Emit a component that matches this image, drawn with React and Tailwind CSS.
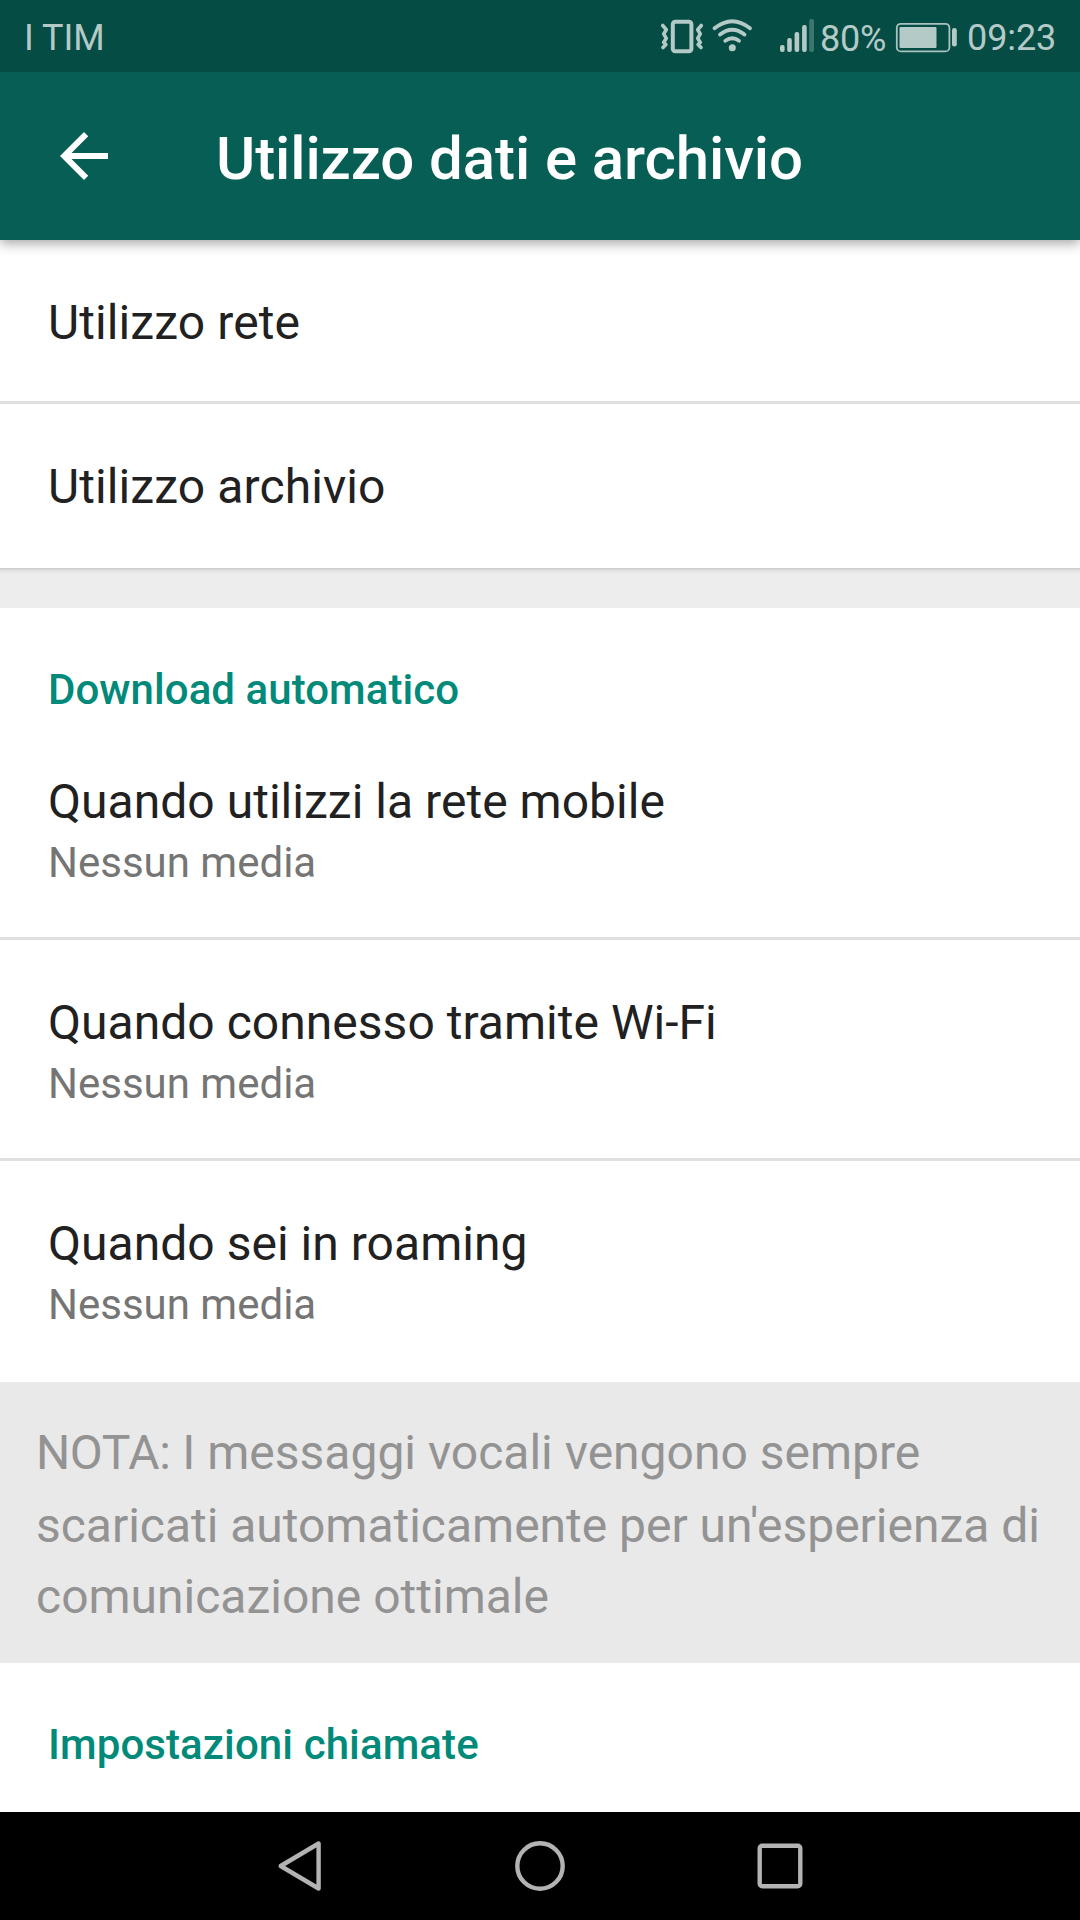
const autoDownload = [
  { title: 'Quando utilizzi la rete mobile', value: 'Nessun media', box: 'h-[226px] pt-[60px] border-b-[3px]' },
  { title: 'Quando connesso tramite Wi-Fi', value: 'Nessun media', box: 'h-[221px] pt-[55px] border-b-[3px]' },
  { title: 'Quando sei in roaming', value: 'Nessun media', box: 'h-[221px] pt-[55px]' },
];

function StatusIcons() {
  return (
    <svg className="h-[72px] w-[160px]" viewBox="658 0 160 72" fill="none" stroke="#b4cac7" strokeLinecap="round" strokeLinejoin="round">
      <rect x="672.8" y="21.8" width="18.6" height="29.4" rx="2.5" strokeWidth="4" />
      <path d="M662.7 25.5l3.6 4.2-2.6 4.2 2.6 4.4-2.6 4.2 2.2 2-2.9 3" strokeWidth="3.6" />
      <path d="M701.3 25.5l-3.6 4.2 2.6 4.2-2.6 4.4 2.6 4.2-2.2 2 2.9 3" strokeWidth="3.6" />
      <path d="M714.5 28.3Q732.3 14.2 750 28.3M720 34.5Q732.3 25 744.5 34.5M725.3 40.8Q732.3 35.8 739 40.8" strokeWidth="3.8" />
      <circle cx="732.3" cy="47.8" r="3.5" fill="#b4cac7" stroke="none" />
      <g stroke="none" fill="#b4cac7">
        <rect x="780" y="45" width="4.6" height="7" rx="2" />
        <rect x="787.2" y="38" width="4.6" height="14" rx="2" />
        <rect x="794.6" y="32" width="4.6" height="20" rx="2" />
        <rect x="802.1" y="25" width="4.6" height="27" rx="2" />
        <rect x="809.2" y="19" width="4.8" height="33" rx="2" fill="#3d766f" />
      </g>
    </svg>
  );
}

function Battery() {
  return (
    <svg className="h-[72px] w-[64px]" viewBox="895 0 64 72" fill="#b4cac7">
      <rect x="896.8" y="23.8" width="52.6" height="27.6" rx="4" fill="none" stroke="#a9c2bf" strokeWidth="1.8" />
      <rect x="899.5" y="27" width="37" height="21" rx="1" />
      <rect x="952" y="28" width="4.8" height="18.5" rx="2.2" />
    </svg>
  );
}

export default function App() {
  return (
    <div className="flex h-[1920px] w-[1080px] flex-col overflow-hidden bg-white font-[Roboto,sans-serif] text-[48px] leading-[56px] text-[#212121]">
      <div className="z-20 flex h-[72px] shrink-0 bg-[#054c44] text-[36px] leading-[75px] text-[#b4cac7]">
        <span className="grow pl-[24px] pt-px">I TIM</span>
        <StatusIcons />
        <span className="w-[77px] pl-[2px] pt-[2px] tracking-[-0.2px]">80%</span>
        <Battery />
        <span className="w-[121px] pl-[8px] pt-px tracking-[-0.1px]">09:23</span>
      </div>

      <header className="z-10 flex h-[168px] shrink-0 items-center bg-[#075e54] pl-[48px] text-white shadow-[0_3px_12px_rgba(0,0,0,0.38)]">
        <svg className="size-[72px]" viewBox="0 0 24 24" fill="currentColor">
          <path d="M20 11H7.83l5.59-5.59L12 4l-8 8 8 8 1.41-1.41L7.83 13H20v-2z" />
        </svg>
        <h1 className="pl-[96px] pt-[5px] text-[60px] font-medium leading-[72px] tracking-[-0.1px]">Utilizzo dati e archivio</h1>
      </header>

      <div className="flex h-[164px] shrink-0 items-center border-b-[3px] border-[#e0e0e0] pl-[48px] pt-[4px] tracking-[0.1px]">Utilizzo rete</div>
      <div className="flex h-[164px] shrink-0 items-center pl-[48px] pt-px tracking-[0.1px]">Utilizzo archivio</div>
      <div className="h-[40px] shrink-0 bg-[#ededed] bg-[linear-gradient(to_bottom,#c8c8c8_0,#dcdcdc_2px,#e8e8e8_4px,#ededed_7px)]" />

      <h2 className="h-[106px] shrink-0 pl-[48px] pt-[58px] text-[42px] font-medium leading-[48px] tracking-[0.05px] text-[#018a7a]">Download automatico</h2>
      {autoDownload.map((row) => (
        <div key={row.title} className={`shrink-0 border-[#e0e0e0] pl-[48px] ${row.box}`}>
          <div className="tracking-[0.03px]">{row.title}</div>
          <div className="mt-[8px] text-[42px] leading-[50px] text-[#757575]">{row.value}</div>
        </div>
      ))}

      <p className="h-[281px] shrink-0 bg-[#e9e9e9] pl-[36px] pt-[35px] leading-[72px] text-[#939393]">
        <span className="block h-[73px]"><span className="tracking-[-0.4px]">NOTA:</span> I messaggi vocali vengono sempre</span>
        <span className="block h-[71px] tracking-[-0.02px]">scaricati automaticamente per un'esperienza di</span>
        <span className="block">comunicazione ottimale</span>
      </p>
      <h2 className="h-[149px] shrink-0 pl-[48px] pt-[58px] text-[42px] font-medium leading-[48px] tracking-[0.1px] text-[#018a7a]">Impostazioni chiamate</h2>

      <nav className="h-[108px] shrink-0 bg-black">
        <div className="flex h-full items-center justify-between pl-[270px] pr-[270px]">
          <svg className="size-[60px]" viewBox="0 0 60 60" fill="none" stroke="#b3b3b3" strokeWidth="4.4" strokeLinejoin="round">
            <path d="M48.6 7.5v45L10.7 30z" />
          </svg>
          <svg className="size-[60px]" viewBox="0 0 60 60" fill="none" stroke="#b3b3b3" strokeWidth="4.4">
            <circle cx="30" cy="30" r="22.7" />
          </svg>
          <svg className="size-[60px]" viewBox="0 0 60 60" fill="none" stroke="#b3b3b3" strokeWidth="4.4">
            <rect x="9.7" y="9.7" width="40.6" height="40.6" rx="2.5" />
          </svg>
        </div>
      </nav>
    </div>
  );
}
